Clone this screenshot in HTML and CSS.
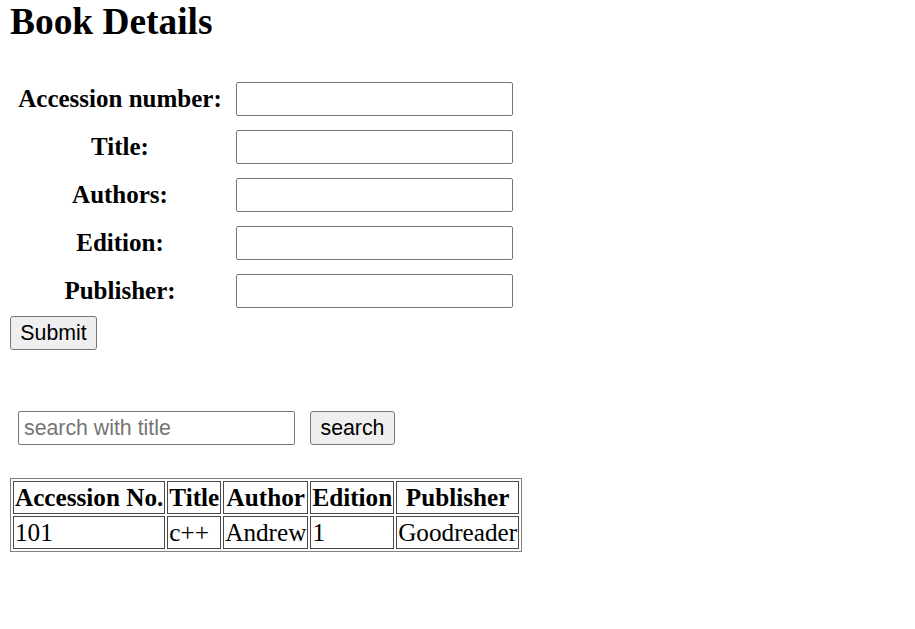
FILE: index.html
```html
<!DOCTYPE html>
<html>
<head>
<meta charset="utf-8">
<title>Book Details</title>
<link rel="stylesheet" href="styles.css">
</head>
<body>
<h1 class="page-title">Book Details</h1>
<form class="book-form">
  <table class="form-table">
    <tr><th>Accession number:</th><td><input class="field" type="text"></td></tr>
    <tr><th>Title:</th><td><input class="field" type="text"></td></tr>
    <tr><th>Authors:</th><td><input class="field" type="text"></td></tr>
    <tr><th>Edition:</th><td><input class="field" type="text"></td></tr>
    <tr><th>Publisher:</th><td><input class="field" type="text"></td></tr>
  </table>
  <button class="btn submit-btn" type="button">Submit</button>
</form>
<div class="search-row">
  <input class="field search-field" type="text" placeholder="search with title">
  <button class="btn" type="button">search</button>
</div>
<table class="books">
  <tr><th>Accession No.</th><th>Title</th><th>Author</th><th>Edition</th><th>Publisher</th></tr>
  <tr><td>101</td><td>c++</td><td>Andrew</td><td>1</td><td>Goodreader</td></tr>
</table>
</body>
</html>
```
FILE: styles.css
```css
html, body {
  background: #fff;
}
body {
  margin: 0;
  padding: 0 10px;
  font-family: "Liberation Serif", "Times New Roman", serif;
  color: #000;
}
.page-title {
  margin: 0 0 31px 0;
  font-size: 37.4px;
  font-weight: bold;
  line-height: 43px;
}
.book-form {
  margin: 0;
}
.form-table {
  border-collapse: separate;
  border-spacing: 2px;
}
.form-table th,
.form-table td {
  padding: 6px;
  vertical-align: middle;
}
.form-table th {
  font-size: 25px;
  font-weight: bold;
  text-align: center;
  width: 204px;
  white-space: nowrap;
}
.form-table td {
  line-height: 0;
}
.field {
  box-sizing: border-box;
  width: 277px;
  height: 34px;
  margin: 0;
  padding: 1px 5px;
  border: 1px solid #767676;
  border-radius: 2px;
  font-family: "Liberation Sans", Arial, sans-serif;
  font-size: 21.3px;
  background: #fff;
  color: #000;
}
.field::placeholder {
  color: #757575;
}
.btn {
  box-sizing: border-box;
  height: 34px;
  margin: 0;
  padding: 0 9px;
  border: 1px solid #767676;
  border-radius: 3px;
  background: #efefef;
  font-family: "Liberation Sans", Arial, sans-serif;
  font-size: 21.3px;
  color: #000;
}
.submit-btn {
  display: block;
  width: 87px;
}
.search-row {
  display: flex;
  gap: 15px;
  margin-top: 61px;
  padding-left: 8px;
}
.search-row .btn {
  width: 85px;
}
.books {
  margin-top: 33px;
  border: 1px solid #808080;
  border-spacing: 2px;
  font-size: 25.2px;
}
.books th,
.books td {
  border: 1px solid #4a4a4a;
  padding: 1px;
  line-height: 29px;
}
.books th {
  font-weight: bold;
  text-align: center;
}
.books td {
  text-align: left;
}
```
